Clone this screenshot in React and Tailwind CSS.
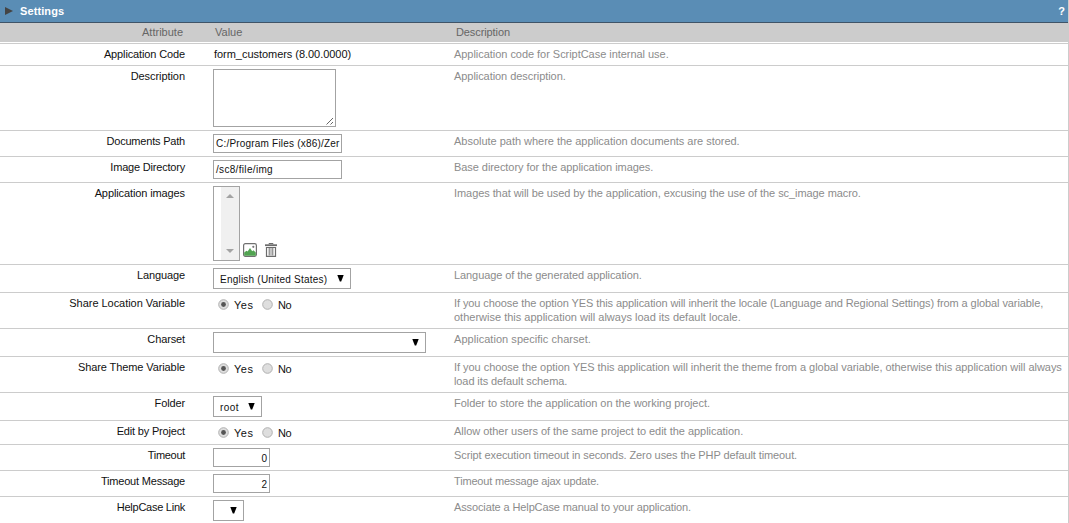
import React from 'react';

function Label({ children, tracking = '' }) {
  return (
    <div className="w-[185px] shrink-0 text-right text-[11px] leading-[13px] text-[#111]">
      <span className={`inline-block whitespace-nowrap ${tracking}`}>{children}</span>
    </div>
  );
}

function Row({ label, height, lines, children, tracking }) {
  return (
    <div className={`flex shrink-0 border-b border-[#ccc] pt-[4px] ${height}`}>
      <Label tracking={tracking}>{label}</Label>
      <div className="ml-[28px] w-[241px] shrink-0">{children}</div>
      <div className="text-[11px] leading-[14px] text-[#8c8c8c]">
        {lines.map(([text, track]) => (
          <div key={text} className="-mt-px mb-px leading-[14px] whitespace-nowrap">
            <span className={`inline-block ${track || ''}`}>{text}</span>
          </div>
        ))}
      </div>
    </div>
  );
}

function Arrow() {
  return (
    <svg className="block h-[7px] w-[7px] shrink-0" viewBox="0 0 7 7">
      <path d="M0.3 0H6.7L4.2 6.5H2.8Z" fill="#000" />
    </svg>
  );
}

function Select({ width, children = '', tracking = '' }) {
  return (
    <div className={`-mt-px flex h-[21px] items-center justify-between border border-[#a3a3a3] bg-white pr-[6px] pb-px pl-[6px] ${width}`}>
      <span className={`pt-[3px] text-[10px] leading-[13px] whitespace-nowrap text-[#111] ${tracking}`}>{children}</span>
      <Arrow />
    </div>
  );
}

function Input({ width, align = '', children, tracking = '' }) {
  return (
    <div className={`-mt-px h-[19px] overflow-hidden border border-[#a3a3a3] bg-white px-[2px] leading-[13px] whitespace-nowrap text-[#111] ${width} ${align || 'pt-[2px] text-[10px]'}`}>
      <span className={`inline-block ${tracking}`}>{children}</span>
    </div>
  );
}

function Radio({ checked = false }) {
  return (
    <svg className="block h-[11px] w-[11px] shrink-0" viewBox="0 0 11 11">
      <circle cx="5.5" cy="5.5" r="4.8" fill="#dedede" stroke="#b0b0b0" />
      {checked && <circle cx="5.5" cy="5.5" r="2.4" fill="#555" />}
    </svg>
  );
}

function YesNo() {
  return (
    <div className="flex pt-[2px] pl-[5px] text-[11px] leading-[13px] text-[#111]">
      <Radio checked />
      <span className="ml-[5px] w-[28px] tracking-[0.5px]">Yes</span>
      <Radio />
      <span className="ml-[5px] tracking-[-0.4px]">No</span>
    </div>
  );
}

function PictureIcon() {
  return (
    <svg className="block h-[14px] w-[14px]" viewBox="0 0 14 14">
      <rect x="0.6" y="0.6" width="12.8" height="12.8" rx="1.8" fill="#fff" stroke="#707070" strokeWidth="1.2" />
      <path d="M1.2 9.5L3.5 7.8L4.6 8.6L7 5L9.2 8.2L10.4 7.2L12.8 9.5V12.8H1.2Z" fill="#51a351" />
      <circle cx="10.3" cy="3.8" r="1.1" fill="#777" />
    </svg>
  );
}

function TrashIcon() {
  return (
    <svg className="block h-[14px] w-[12px]" viewBox="0 0 12 14" fill="none" stroke="#6c6c6c">
      <path d="M0 2.2H12" strokeWidth="1.8" />
      <path d="M4 1.3V0.5H8V1.3" />
      <path d="M1.5 4V13.4H10.5V4" strokeWidth="1.2" />
      <path d="M1 4.5H11" />
      <path d="M4.2 4.5V12.5M7.8 4.5V12.5" strokeWidth="1" />
      <path d="M6 4.5V12.5" strokeWidth="0.8" />
    </svg>
  );
}

function ImageList() {
  return (
    <div className="-mt-px flex items-end">
      <div className="flex h-[75px] w-[27px] justify-end border border-[#a3a3a3] bg-white">
        <div className="flex w-[18px] flex-col items-center justify-between bg-[#f0f0f0] pt-[7px] pb-[7px]">
          <svg className="h-[4px] w-[8px]" viewBox="0 0 8 4"><path d="M0 4L4 0L8 4Z" fill="#a3a3a3" /></svg>
          <svg className="h-[4px] w-[8px]" viewBox="0 0 8 4"><path d="M0 0L4 4L8 0Z" fill="#a3a3a3" /></svg>
        </div>
      </div>
      <div className="mb-[4px] ml-[3px]"><PictureIcon /></div>
      <div className="mb-[4px] ml-[8px]"><TrashIcon /></div>
    </div>
  );
}

export default function App() {
  return (
    <div className="h-[523px] w-[1069px] overflow-hidden bg-white font-['Liberation_Sans',Arial,sans-serif]">
      <div className="flex h-[523px] flex-col border-r border-[#ccc]">
        <div className="flex h-[23px] shrink-0 items-center border-b border-[#3f5468] bg-[#5a8db5] pl-[5px] text-[11px] font-bold text-white">
          <svg className="h-[8px] w-[8px]" viewBox="0 0 8 8"><path d="M0 0L8 4L0 8Z" fill="#444" /></svg>
          <span className="ml-[7px] pt-px tracking-[0.1px]">Settings</span>
          <span className="mr-[3px] ml-auto pt-px">?</span>
        </div>
        <div className="flex h-[19px] shrink-0 bg-[#ccc] pt-[3px] text-[11px] leading-[13px] text-[#666]">
          <div className="w-[183px] text-right"><span className="inline-block">Attribute</span></div>
          <div className="ml-[32px] w-[241px]"><span className="inline-block">Value</span></div>
          <div><span className="inline-block tracking-[-0.1px]">Description</span></div>
        </div>
        <div className="h-[2px] shrink-0 border-b border-[#ccc]" />
        <Row label="Application Code" tracking="tracking-[-0.13px]" height="h-[22px]" lines={[['Application code for ScriptCase internal use.', 'tracking-[-0.04px]']]}>
          <div className="pl-px text-[11px] leading-[13px] text-[#111]"><span className="inline-block tracking-[-0.04px]">form_customers (8.00.0000)</span></div>
        </Row>
        <Row label="Description" tracking="tracking-[-0.06px]" height="h-[65px]" lines={[['Application description.', 'tracking-[-0.06px]']]}>
          <div className="-mt-px flex h-[58px] w-[123px] items-end justify-end border border-[#a3a3a3]">
            <svg className="h-[9px] w-[9px]" viewBox="0 0 9 9"><path d="M0.5 7.5L7 1M4.5 7.5L7 5" stroke="#666" fill="none" /></svg>
          </div>
        </Row>
        <Row label="Documents Path" tracking="tracking-[-0.2px]" height="h-[26px]" lines={[['Absolute path where the application documents are stored.', 'tracking-[-0.02px]']]}>
          <Input width="w-[129px]" tracking="tracking-[0.2px]">C:/Program Files (x86)/Zer</Input>
        </Row>
        <Row label="Image Directory" tracking="tracking-[-0.2px]" height="h-[26px]" lines={[['Base directory for the application images.', 'tracking-[-0.06px]']]}>
          <Input width="w-[129px]" tracking="tracking-[0.32px]">/sc8/file/img</Input>
        </Row>
        <Row label="Application images" tracking="tracking-[-0.11px]" height="h-[82px]" lines={[['Images that will be used by the application, excusing the use of the sc_image macro.', 'tracking-[-0.07px]']]}>
          <ImageList />
        </Row>
        <Row label="Language" tracking="tracking-[-0.12px]" height="h-[28px]" lines={[['Language of the generated application.', 'tracking-[-0.08px]']]}>
          <Select width="w-[138px]" tracking="tracking-[0.22px]">English (United States)</Select>
        </Row>
        <Row
          label="Share Location Variable"
          tracking="tracking-[-0.04px]"
          height="h-[36px]"
          lines={[
            ['If you choose the option YES this application will inherit the locale (Language and Regional Settings) from a global variable,', 'tracking-[-0.088px]'],
            ['otherwise this application will always load its default locale.'],
          ]}
        >
          <YesNo />
        </Row>
        <Row label="Charset" tracking="tracking-[-0.12px]" height="h-[28px]" lines={[['Application specific charset.', 'tracking-[0.04px]']]}>
          <Select width="w-[213px]" />
        </Row>
        <Row
          label="Share Theme Variable"
          tracking="tracking-[-0.1px]"
          height="h-[36px]"
          lines={[
            ['If you choose the option YES this application will inherit the theme from a global variable, otherwise this application will always', 'tracking-[-0.04px]'],
            ['load its default schema.', 'tracking-[-0.1px]'],
          ]}
        >
          <YesNo />
        </Row>
        <Row label="Folder" tracking="tracking-[-0.12px]" height="h-[28px]" lines={[['Folder to store the application on the working project.', 'tracking-[-0.05px]']]}>
          <Select width="w-[49px]" tracking="tracking-[0.4px]">root</Select>
        </Row>
        <Row label="Edit by Project" tracking="tracking-[-0.17px]" height="h-[24px]" lines={[['Allow other users of the same project to edit the application.', 'tracking-[-0.03px]']]}>
          <YesNo />
        </Row>
        <Row label="Timeout" tracking="tracking-[-0.3px]" height="h-[26px]" lines={[['Script execution timeout in seconds. Zero uses the PHP default timeout.', 'tracking-[-0.1px]']]}>
          <Input width="w-[57px]" align="pt-[3px] text-right text-[10px]">0</Input>
        </Row>
        <Row label="Timeout Message" tracking="tracking-[-0.2px]" height="h-[26px]" lines={[['Timeout message ajax update.', 'tracking-[-0.18px]']]}>
          <Input width="w-[57px]" align="pt-[3px] text-right text-[10px]">2</Input>
        </Row>
        <Row label="HelpCase Link" tracking="tracking-[-0.26px]" height="h-[27px]" lines={[['Associate a HelpCase manual to your application.', 'tracking-[-0.12px]']]}>
          <Select width="w-[31px]" />
        </Row>
      </div>
    </div>
  );
}
